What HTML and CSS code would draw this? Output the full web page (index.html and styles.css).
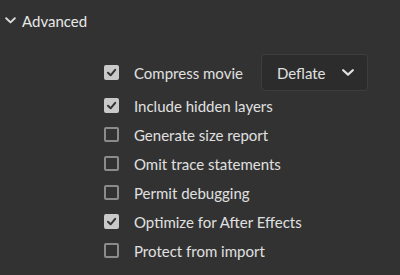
FILE: index.html
```html
<!DOCTYPE html>
<html>
<head>
<meta charset="utf-8">
<link rel="stylesheet" href="styles.css">
</head>
<body>
<div class="panel">
  <div class="section-header">
    <svg class="chev" width="11" height="7" viewBox="0 0 11 7"><path d="M1.2 1.2 L5.5 5.4 L9.8 1.2" fill="none" stroke="currentColor" stroke-width="2" stroke-linecap="round" stroke-linejoin="round"/></svg>
    <span class="section-title">Advanced</span>
  </div>
  <div class="options">
    <div class="row row-first">
      <span class="cb checked"><svg viewBox="0 0 11 11" width="11" height="11"><path d="M2 5.8 L4.6 8.3 L9.2 2.8" fill="none" stroke="#333" stroke-width="2" stroke-linecap="round" stroke-linejoin="round"/></svg></span>
      <span class="label">Compress movie</span>
      <div class="dropdown">
        <span>Deflate</span>
        <svg width="12" height="7" viewBox="0 0 12 7"><path d="M1.2 1.2 L6 5.6 L10.8 1.2" fill="none" stroke="currentColor" stroke-width="2.2" stroke-linecap="round" stroke-linejoin="round"/></svg>
      </div>
    </div>
    <div class="row">
      <span class="cb checked"><svg viewBox="0 0 11 11" width="11" height="11"><path d="M2 5.8 L4.6 8.3 L9.2 2.8" fill="none" stroke="#333" stroke-width="2" stroke-linecap="round" stroke-linejoin="round"/></svg></span>
      <span class="label">Include hidden layers</span>
    </div>
    <div class="row">
      <span class="cb"></span>
      <span class="label">Generate size report</span>
    </div>
    <div class="row">
      <span class="cb"></span>
      <span class="label">Omit trace statements</span>
    </div>
    <div class="row">
      <span class="cb"></span>
      <span class="label">Permit debugging</span>
    </div>
    <div class="row">
      <span class="cb checked"><svg viewBox="0 0 11 11" width="11" height="11"><path d="M2 5.8 L4.6 8.3 L9.2 2.8" fill="none" stroke="#333" stroke-width="2" stroke-linecap="round" stroke-linejoin="round"/></svg></span>
      <span class="label">Optimize for After Effects</span>
    </div>
    <div class="row">
      <span class="cb"></span>
      <span class="label">Protect from import</span>
    </div>
  </div>
</div>
</body>
</html>
```
FILE: styles.css
```css
html, body {
  margin: 0;
  padding: 0;
  background: #323232;
}
body {
  font-family: Lato, "Open Sans", sans-serif;
  font-size: 15px;
  color: #e0e0e0;
  width: 400px;
  height: 275px;
  overflow: hidden;
}
.section-header {
  height: 41px;
  display: flex;
  align-items: center;
  padding-left: 5px;
  gap: 6px;
  color: #e8e8e8;
}
.chev {
  display: block;
  color: #d8d8d8;
}
.options {
  padding-top: 13px;
  padding-left: 104px;
  display: flex;
  flex-direction: column;
}
.row {
  height: 29px;
  display: flex;
  align-items: center;
  gap: 15px;
}
.row-first {
  height: 37px;
}
.cb {
  width: 15px;
  height: 15px;
  box-sizing: border-box;
  border: 2px solid #8b8b8b;
  border-radius: 2px;
  flex: none;
  display: flex;
  align-items: center;
  justify-content: center;
}
.cb svg {
  display: block;
}
.cb.checked {
  background: #c9c9c9;
  border-color: #c9c9c9;
}
.label {
  white-space: nowrap;
}
.dropdown {
  margin-left: 3px;
  width: 107px;
  height: 37px;
  box-sizing: border-box;
  border: 1px solid #3e3e3e;
  border-radius: 4px;
  background: #2c2c2c;
  display: flex;
  align-items: center;
  justify-content: space-between;
  padding: 0 13px 0 15px;
  color: #e0e0e0;
}
.dropdown svg {
  display: block;
}
```
